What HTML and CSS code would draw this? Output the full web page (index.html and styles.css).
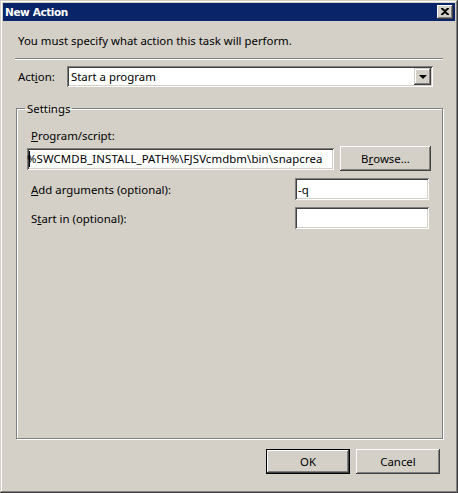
FILE: index.html
```html
<!DOCTYPE html>
<html>
<head>
<meta charset="utf-8">
<title>New Action</title>
<link rel="stylesheet" href="styles.css">
</head>
<body>
<div class="window">
  <div class="titlebar">
    <span class="title">New Action</span>
    <span class="close">
      <svg width="8" height="7" viewBox="0 0 8 7"><path d="M0 0h2l2 2 2-2h2v1l-3 2.5 3 2.5v1h-2l-2-2-2 2h-2v-1l3-2.5-3-2.5z" fill="#000"/></svg>
    </span>
  </div>
  <div class="content">
    <p class="intro">You must specify what action this task will perform.</p>
    <div class="sep"></div>
    <div class="action-row">
      <span class="lbl action-lbl">Act<u>i</u>on:</span>
      <div class="combo">
        <span class="combo-text">Start a program</span>
        <span class="drop"><span class="arrow"></span></span>
      </div>
    </div>
    <fieldset class="group">
      <legend>Settings</legend>
      <div class="lbl prog-lbl"><u>P</u>rogram/script:</div>
      <div class="prog-row">
        <div class="field prog"><span class="caret"></span><span class="prog-text">%SWCMDB_INSTALL_PATH%\FJSVcmdbm\bin\snapcrea</span></div>
        <span class="btn browse">B<u>r</u>owse...</span>
      </div>
      <div class="opt-row">
        <span class="lbl"><u>A</u>dd arguments (optional):</span>
        <div class="field small">-q</div>
      </div>
      <div class="opt-row">
        <span class="lbl">S<u>t</u>art in (optional):</span>
        <div class="field small"></div>
      </div>
    </fieldset>
    <div class="buttons">
      <span class="btn default">OK</span>
      <span class="btn">Cancel</span>
    </div>
  </div>
</div>
</body>
</html>
```
FILE: styles.css
```css
* { box-sizing: border-box; }
html, body { margin: 0; padding: 0; background: #d4d0c8; }
body { font-family: "Noto Sans", "Open Sans", sans-serif; font-size: 11.4px; color: #000; }
u { text-decoration: underline; text-underline-offset: 1px; }

.window {
  width: 458px;
  height: 493px;
  padding: 3px;
  background: #d4d0c8;
  box-shadow: inset -1px -1px #404040, inset 1px 1px #d4d0c8, inset -2px -2px #808080, inset 2px 2px #ffffff;
  display: flex;
  flex-direction: column;
}

.titlebar {
  height: 18px;
  background: #0a246a;
  display: flex;
  align-items: center;
  justify-content: space-between;
  padding: 0 2px 0 2px;
}
.title {
  color: #fff;
  font-family: "DejaVu Sans", sans-serif;
  font-weight: bold;
  font-size: 10.5px;
  letter-spacing: -0.4px;
}
.close {
  width: 16px;
  height: 14px;
  background: #d4d0c8;
  box-shadow: inset -1px -1px #404040, inset 1px 1px #ffffff, inset -2px -2px #808080;
  display: flex;
  align-items: center;
  justify-content: center;
  padding-bottom: 1px;
}

.content {
  flex: 1;
  padding: 0 12px;
  display: flex;
  flex-direction: column;
}
.intro {
  margin: 12px 0 0 3px;
  line-height: 15px;
  height: 15px;
}
.sep {
  margin-top: 10px;
  height: 2px;
  border-top: 1px solid #808080;
  border-bottom: 1px solid #ffffff;
}
.action-row {
  margin-top: 6px;
  display: flex;
  align-items: center;
  height: 21px;
}
.action-lbl {
  width: 52px;
  padding-left: 3px;
}
.lbl { line-height: 15px; }

.combo {
  width: 366px;
  height: 21px;
  background: #fff;
  box-shadow: inset 1px 1px #808080, inset -1px -1px #ffffff, inset 2px 2px #404040, inset -2px -2px #d4d0c8;
  display: flex;
  align-items: center;
  padding: 2px;
}
.combo-text { flex: 1; padding-left: 2px; line-height: 15px; }
.drop {
  width: 17px;
  height: 17px;
  background: #d4d0c8;
  box-shadow: inset -1px -1px #404040, inset 1px 1px #d4d0c8, inset -2px -2px #808080, inset 2px 2px #ffffff;
  display: flex;
  align-items: center;
  justify-content: center;
}
.arrow {
  width: 0;
  height: 0;
  border-left: 4px solid transparent;
  border-right: 4px solid transparent;
  border-top: 4px solid #000;
}

.group {
  margin: 14px 0 0 1px;
  width: 427px;
  height: 338px;
  border: 1px solid #808080;
  box-shadow: inset 1px 1px #ffffff, 1px 1px #ffffff;
  padding: 0 0 0 10px;
  min-width: 0;
}
.group legend {
  padding: 0 2px;
  margin-left: -2px;
  line-height: 15px;
}
.prog-lbl {
  margin: 12px 0 0 4px;
}
.prog-row {
  margin-top: 3px;
  display: flex;
  align-items: center;
  gap: 6px;
}
.field {
  height: 22px;
  background: #fff;
  box-shadow: inset 1px 1px #808080, inset -1px -1px #ffffff, inset 2px 2px #404040, inset -2px -2px #d4d0c8;
  padding: 0 3px;
  display: flex;
  align-items: center;
  line-height: 15px;
  overflow: hidden;
  white-space: nowrap;
}
.prog {
  width: 307px;
  position: relative;
  padding-left: 2px;
}
.prog-text { margin-left: -2px; letter-spacing: 0.1px; }
.caret {
  position: absolute;
  left: 2px;
  top: 3px;
  width: 1px;
  height: 16px;
  background: #000;
}
.btn {
  height: 25px;
  width: 84px;
  background: #d4d0c8;
  box-shadow: inset -1px -1px #404040, inset 1px 1px #ffffff, inset -2px -2px #808080;
  display: flex;
  align-items: center;
  justify-content: center;
  line-height: 15px;
}
.browse { width: 91px; }
.btn.default {
  box-shadow: inset 0 0 0 1px #000, inset -2px -2px #404040, inset 2px 2px #ffffff, inset -3px -3px #808080;
}
.opt-row {
  margin-top: 7px;
  display: flex;
  align-items: center;
  justify-content: space-between;
  padding-left: 4px;
  width: 402px;
}
.small { width: 134px; }

.buttons {
  margin-top: 10px;
  display: flex;
  justify-content: flex-end;
  gap: 6px;
  padding-right: 3px;
}
```
